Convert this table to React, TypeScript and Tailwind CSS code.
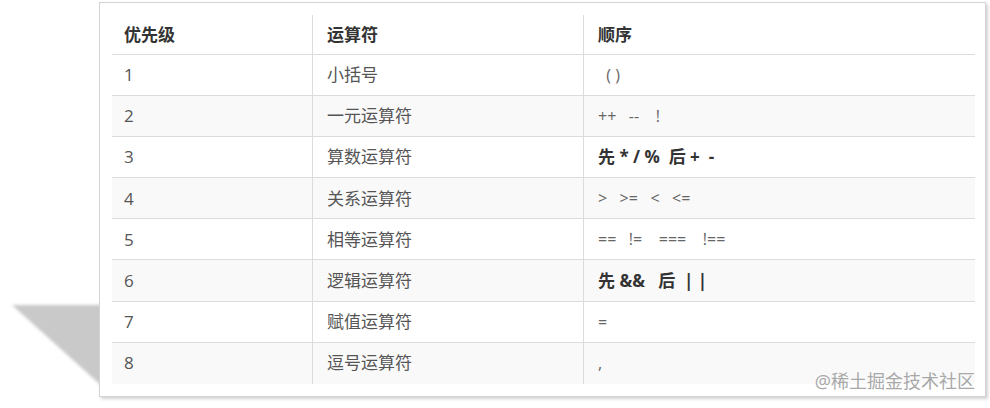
import React from 'react'

// 运算符优先级表
const rows: { level: string; name: string; order: string; bold?: boolean }[] = [
  { level: '1', name: '小括号', order: '  ( )' },
  { level: '2', name: '一元运算符', order: '++   --    !' },
  { level: '3', name: '算数运算符', order: '先 * / %  后 +  -', bold: true },
  { level: '4', name: '关系运算符', order: '>   >=   <   <=' },
  { level: '5', name: '相等运算符', order: '==   !=    ===    !==' },
  { level: '6', name: '逻辑运算符', order: '先 &&   后  | |', bold: true },
  { level: '7', name: '赋值运算符', order: '=' },
  { level: '8', name: '逗号运算符', order: ',' },
]

const font = "font-['Open_Sans','Noto_Sans_CJK_SC',sans-serif]"

export default function App() {
  return (
    <div className={`relative w-[990px] h-[408px] bg-white overflow-hidden ${font}`}>
      {/* shadow wedge behind the card */}
      <svg className="absolute left-0 top-0" width="110" height="408" viewBox="0 0 110 408">
        <defs>
          <filter id="blur" x="-20%" y="-20%" width="140%" height="140%">
            <feGaussianBlur stdDeviation="1.6" />
          </filter>
        </defs>
        <polygon points="12,305 104,305 104,388" fill="#c9c9c9" filter="url(#blur)" />
      </svg>

      <div className="relative pl-[99px] pt-[2px]">
        <div className="w-[887px] h-[395px] bg-white border border-[#d4d4d4] shadow-[2px_2px_3px_rgba(0,0,0,0.18)] pl-[12px] pt-[12px] relative">
          <div className="w-[863px] text-[17px] text-[#555]">
            <div className="grid grid-cols-[200px_271px_392px] h-[40px] font-bold text-[#333] border-b border-[#dcdcdc]">
              <div className="flex items-center pl-[12px]">优先级</div>
              <div className="flex items-center pl-[14px] border-l border-[#dcdcdc]">运算符</div>
              <div className="flex items-center pl-[14px] border-l border-[#dcdcdc]">顺序</div>
            </div>
            {rows.map((r, i) => (
              <div
                key={r.level}
                className={`grid grid-cols-[200px_271px_392px] h-[41.1px] ${i < rows.length - 1 ? 'border-b border-[#dcdcdc]' : ''} ${i % 2 === 1 ? 'bg-[#f9f9f9]' : 'bg-white'}`}
              >
                <div className="flex items-center pl-[12px]">{r.level}</div>
                <div className="flex items-center pl-[14px] border-l border-[#dcdcdc]">{r.name}</div>
                <div
                  className={`flex items-center pl-[14px] border-l border-[#dcdcdc] whitespace-pre ${r.bold ? 'font-bold text-[#333] text-[17px]' : 'text-[16px] text-[#666]'}`}
                >
                  {r.order}
                </div>
              </div>
            ))}
          </div>
          <div className="absolute right-[10px] bottom-[1px] text-[18px] text-[#a8a8a8] [text-shadow:0_0_2px_#fff]">
            @稀土掘金技术社区
          </div>
        </div>
      </div>
    </div>
  )
}
